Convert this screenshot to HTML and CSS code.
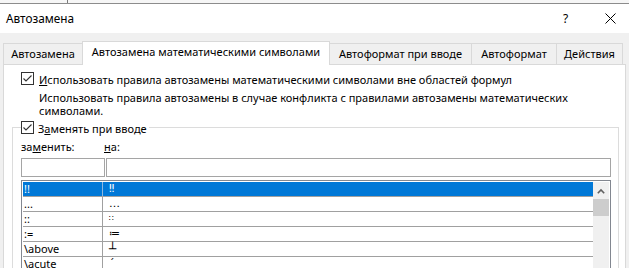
FILE: index.html
```html
<!DOCTYPE html>
<html lang="ru">
<head>
<meta charset="utf-8">
<title>Автозамена</title>
<link rel="stylesheet" href="styles.css">
</head>
<body>
<div class="window">
  <div class="topstrip"><div class="topstrip-seg"></div></div>
  <div class="titlebar">
    <span class="title">Автозамена</span>
    <span class="tb-help">?</span>
    <span class="tb-close"><svg width="11" height="11" viewBox="0 0 11 11"><path d="M0.5 0.5 L10.5 10.5 M10.5 0.5 L0.5 10.5" stroke="#000" stroke-width="1" fill="none"/></svg></span>
  </div>
  <div class="dialog">
    <div class="tabs">
      <div class="tab t1">Автозамена</div>
      <div class="tab t2 active">Автозамена математическими символами</div>
      <div class="tab t3">Автоформат при вводе</div>
      <div class="tab t4">Автоформат</div>
      <div class="tab t5">Действия</div>
    </div>
    <div class="panel">
      <div class="check-row row1">
        <svg class="cb" width="13" height="13" viewBox="0 0 13 13"><rect x="0.5" y="0.5" width="12" height="12" fill="#fff" stroke="#333"/><polyline points="2.5,6.5 5,9 10.5,3.5" fill="none" stroke="#333" stroke-width="1.1"/></svg>
        <span class="cb-label"><u>И</u>спользовать правила автозамены математическими символами вне областей формул</span>
      </div>
      <div class="desc">
        <div>Использовать правила автозамены в случае конфликта с правилами автозамены математических</div>
        <div>символами.</div>
      </div>
      <fieldset class="group">
        <legend class="check-row">
          <svg class="cb" width="13" height="13" viewBox="0 0 13 13"><rect x="0.5" y="0.5" width="12" height="12" fill="#fff" stroke="#333"/><polyline points="2.5,6.5 5,9 10.5,3.5" fill="none" stroke="#333" stroke-width="1.1"/></svg>
          <span class="cb-label leg-label">З<u>а</u>менять при вводе</span>
        </legend>
        <div class="labels">
          <span class="lbl-from">за<u>м</u>енить:</span>
          <span class="lbl-to"><u>н</u>а:</span>
        </div>
        <div class="inputs">
          <div class="input in-from"></div>
          <div class="input in-to"></div>
        </div>
        <div class="list">
          <div class="rows">
            <div class="row selected"><span class="c1">!!</span><span class="c2">‼</span></div>
            <div class="row"><span class="c1">...</span><span class="c2">…</span></div>
            <div class="row"><span class="c1">::</span><span class="c2 small">∷</span></div>
            <div class="row"><span class="c1">:=</span><span class="c2">≔</span></div>
            <div class="row"><span class="c1">\above</span><span class="c2 box">┴</span></div>
            <div class="row"><span class="c1">\acute</span><span class="c2">´</span></div>
          </div>
          <div class="scrollbar">
            <div class="sb-up"><svg width="8" height="6" viewBox="0 0 8 6"><polyline points="0.8,5.2 4,2 7.2,5.2" fill="none" stroke="#606060" stroke-width="1.6"/></svg></div>
            <div class="sb-thumb"></div>
          </div>
        </div>
      </fieldset>
    </div>
  </div>
</div>
</body>
</html>
```
FILE: styles.css
```css
* { box-sizing: border-box; }
html, body {
  margin: 0;
  padding: 0;
  width: 629px;
  height: 268px;
  overflow: hidden;
  background: #f0f0f0;
  font-family: "Segoe UI", "Noto Sans", sans-serif;
  font-size: 11px;
  color: #000;
}
.window {
  width: 629px;
  height: 268px;
  display: flex;
  flex-direction: column;
}
.topstrip {
  height: 4px;
  background: #f6f6f6;
  border-bottom: 1px solid #8c8c8c;
  display: flex;
}
.topstrip-seg {
  width: 68px;
  border-right: 1px solid #7a7a7a;
}
.titlebar {
  height: 29px;
  background: #fff;
  display: flex;
  align-items: center;
  padding-left: 6px;
}
.title {
  flex: 1;
  font-size: 11.8px;
  line-height: 29px;
}
.tb-help {
  width: 12px;
  margin-right: 30px;
  font-size: 12px;
  line-height: 29px;
}
.tb-close {
  display: flex;
  margin-right: 13px;
}
.dialog {
  flex: 1;
  padding: 8px 3px 0 3px;
  display: flex;
  flex-direction: column;
  min-height: 0;
}
.tabs {
  display: flex;
  align-items: flex-end;
  height: 23px;
}
.tab {
  height: 21px;
  border: 1px solid #d9d9d9;
  border-bottom: none;
  background: #f0f0f0;
  margin-right: -1px;
  display: flex;
  align-items: center;
  justify-content: center;
  line-height: 14px;
  white-space: nowrap;
  padding-bottom: 0;
}
.tab.active {
  height: 24px;
  margin-bottom: -1px;
  background: #fff;
  position: relative;
  z-index: 1;
  padding-bottom: 3px;
}
.t1 { width: 80px; }
.t2 { width: 248px; }
.t3 { width: 143px; }
.t4 { width: 86px; }
.t5 { width: 67px; }
.panel {
  flex: 1;
  background: #fff;
  border: 1px solid #d9d9d9;
  border-bottom: none;
  min-height: 0;
  overflow: hidden;
}
.check-row {
  display: flex;
  align-items: center;
  height: 13px;
  line-height: 13px;
}
.row1 {
  margin: 7px 0 0 17px;
}
.cb {
  flex: none;
  display: block;
}
.cb-label {
  margin-left: 5px;
  white-space: nowrap;
  padding-top: 1px;
}
.leg-label {
  margin-left: 4px;
}
.desc {
  margin: 6px 0 0 35px;
  line-height: 13px;
  white-space: nowrap;
}
.group {
  margin: 4px 6px 0 8px;
  padding: 6px 7px 0 8px;
  border: 1px solid #dcdcdc;
  border-bottom: none;
  min-width: 0;
}
.group legend {
  padding: 0 2px 0 0;
}
.labels {
  display: flex;
  line-height: 13px;
  white-space: nowrap;
}
.lbl-from { width: 83px; }
.inputs {
  display: flex;
  margin-top: 5px;
  height: 19px;
}
.input {
  height: 19px;
  border: 1px solid #a5a5a5;
  background: #fff;
}
.in-from { width: 84px; margin-right: 1px; }
.in-to { flex: 1; }
.list {
  margin-top: 3px;
  border: 1px solid #828790;
  border-bottom: none;
  padding: 1px 1px 0 1px;
  display: flex;
  height: 100px;
}
.rows {
  flex: 1;
}
.row {
  display: flex;
  height: 15px;
  border-bottom: 1px solid #a0a0a0;
  line-height: 14px;
  white-space: nowrap;
}
.row.selected {
  background: #0078d7;
  color: #fff;
}
.c1 {
  width: 80px;
  padding-left: 1px;
  border-right: 1px solid #a0a0a0;
}
.row.selected .c1 { border-right-color: #8fb8de; }
.c2 {
  padding-left: 6px;
  font-family: "DejaVu Sans", "Noto Sans", sans-serif;
  font-size: 11px;
}
.small { font-size: 8px; color: #000; }
.box { font-size: 12px; line-height: 12px; padding-top: 1px; }
.scrollbar {
  width: 16px;
  background: #f0f0f0;
  display: flex;
  flex-direction: column;
}
.sb-up {
  height: 17px;
  display: flex;
  align-items: center;
  justify-content: center;
}
.sb-thumb {
  height: 17px;
  background: #cdcdcd;
}
```
